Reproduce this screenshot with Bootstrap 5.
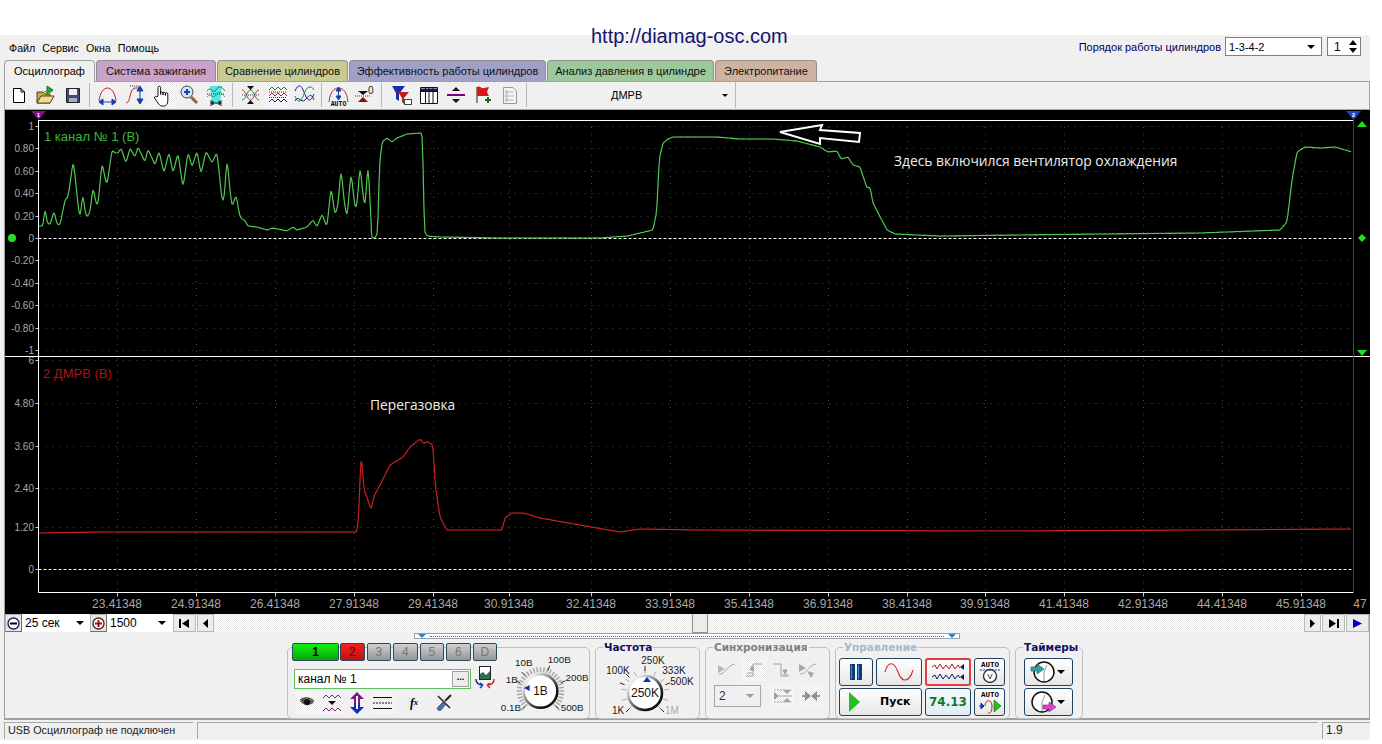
<!DOCTYPE html>
<html lang="ru">
<head>
<meta charset="UTF-8">
<title>Диамаг осциллограф</title>
<link rel="stylesheet" href="https://cdn.jsdelivr.net/npm/bootstrap@5.3.0/dist/css/bootstrap.min.css">
<style>
    body { background: #fff; font: 11px "Liberation Sans", Arial, sans-serif; color: #000; overflow: hidden; }
    svg { display: block; }

    .top-band { height: 35px; }
    .site-url { position: absolute; left: 591px; top: 24px; font-size: 20px; color: #14146e; line-height: 24px; z-index: 5; }
    .app { width: 1370px; height: 705px; background: #f0f0f0; }

    .menu-row { height: 25px; padding: 2px 9px 0 9px; }
    .menu-row span.mi { margin-right: 7px; line-height: 22px; font-size: 10.7px; }
    .order-label { color: #000060; }
    .win-field { background: #fff; border: 1px solid #808080; height: 19px; line-height: 16px; padding-left: 3px; }
    .caret-dn { display: inline-block; border: 4px solid transparent; border-top: 4px solid #000; border-bottom: 0; }
    .caret-grey { border-top-color: #999; }

    .tabs-row.nav-tabs { height: 21px; margin-left: 4px; border: 0; flex-wrap: nowrap; gap: 1px; }
    .tabs-row .nav-link { height: 21px; padding: 2px 0 0; text-align: center; font-size: 11px; color: #111; border: 1px solid #8f8f8f; border-bottom: 0; border-radius: 4px 4px 0 0; line-height: 17px; }
    .tabs-row .nav-link.active { background: #f0f0f0; height: 22px; position: relative; z-index: 2; color: #000; border-color: #a0a0a0; }

    .page-box { margin-left: 4px; width: 1366px; height: 639px; border: 1px solid #a0a0a0; border-bottom: 2px solid #a0a0a0; border-top-color: #a0a0a0; }
    .tool-row { height: 28px; border-bottom: 1px solid #a8a8a8; padding-bottom: 1px; }
    .tb-btn { width: 27px; height: 26px; flex: none; }
    .tb-narrow { width: 25px; }
    .tb-sep { width: 1px; height: 24px; background: #b8b8b8; margin: 0 4px 0 3px; flex: none; }
    .tb-combo { width: 209px; height: 26px; border-right: 1px solid #b8b8b8; padding-right: 7px; padding-left: 84px; }
    .dither { background: repeating-conic-gradient(#fff 0 25%, #e8e8e8 0 50%) 0 0 / 2px 2px; }

    .scroll-row { height: 18px; position: relative; background: #fff; }
    .zoom-btn { width: 17px; height: 18px; flex: none; background: #e8e8e8; border: 1px solid #b0b0b0; border-right-color: #707070; border-bottom-color: #707070; }
    .zoom-field { font-size: 12px; line-height: 18px; padding-left: 3px; }
    .nav-btn { height: 18px; flex: none; background: #ececec; border: 1px solid #fff; border-right-color: #707070; border-bottom-color: #707070; outline: 1px solid #b8b8b8; outline-offset: -1px; }
    .scroll-thumb { position: absolute; left: 687px; top: 0; width: 16px; height: 19px; background: #ececec; border: 1px solid #909090; border-top-color: #e8e8e8; z-index: 3; }

    .range-row { height: 7px; padding-left: 409px; padding-top: 1px; }
    .range-bar { width: 546px; height: 6px; border: 1px solid #9aa4b0; background: #fff; }

    .panel-row { padding: 8px 0 0 282px; gap: 5px; }
    .gbox { position: relative; height: 72px; border: 1px solid #c0c0c0; border-radius: 5px; flex: none; }
    .gbox-title { position: absolute; top: -7px; left: 7px; padding: 0 1px; background: #f0f0f0; font: bold 10.5px/13px "DejaVu Sans", sans-serif; }
    .t-navy { color: #101060; }
    .t-grey { color: #808080; }
    .t-pale { color: #a8b8d0; }

    .ch-btn { height: 18px; width: 25px; padding: 0; font-size: 12px; line-height: 16px; border: 1px solid #2a4a5a; border-radius: 2px; background: linear-gradient(#d0d0d0, #969696); color: #777; }
    .ch-on { width: 48px; background: linear-gradient(#10f010, #08a808); color: #000; font-weight: bold; }
    .ch-red { background: linear-gradient(#f42020, #c01010); color: #600; }
    .name-field { width: 177px; height: 20px; background: #fff; border: 1px solid #60c060; margin: 7px 0 0 2px; padding-left: 3px; font-size: 12px; line-height: 18px; }
    .dots-btn { width: 17px; height: 16px; background: #ececec; border: 1px solid #a0a0a0; font-weight: bold; font-size: 9px; line-height: 11px; text-align: center; }
    .sq-btn { width: 24px; height: 23px; flex: none; }

    .ctl-btn { height: 28px; padding: 0; flex: none; border: 1px solid #23415a; border-radius: 3px; background: linear-gradient(#fff, #e6e6e6); }
    .ctl-red { border-color: #e04040; border-width: 2px; }
    .ctl-text { font: bold 12px/26px "DejaVu Sans", sans-serif; }
    .speed-val { color: #0a7a20; background: linear-gradient(#f4f8fc, #e0ecf6); }
    .grey-field { width: 47px; height: 22px; border: 1px solid #a8a8a8; padding: 0 6px 0 4px; font-size: 12px; color: #333; }

    .status-row { height: 17px; margin: 2px 0 0 4px; gap: 4px; }
    .status-cell { height: 17px; border-top: 1px solid #a8a8a8; border-left: 1px solid #a8a8a8; padding-left: 3px; line-height: 15px; font-size: 10.8px; color: #222; }
</style>
</head>
<body>

<div class="top-band"></div>
<div class="site-url">http://diamag-osc.com</div>

<div class="app">
    <!-- menu -->
    <div class="menu-row d-flex align-items-start">
        <span class="mi">Файл</span><span class="mi">Сервис</span><span class="mi">Окна</span><span class="mi">Помощь</span>
        <div class="ms-auto d-flex align-items-center gap-1">
            <span class="order-label">Порядок работы цилиндров</span>
            <div class="win-field d-flex align-items-center justify-content-between" style="width:97px;padding-right:6px"><span>1-3-4-2</span><i class="caret-dn"></i></div>
            <div class="win-field d-flex align-items-center justify-content-between" style="width:34px;margin-left:1px;padding-right:3px;padding-left:6px;font-size:12px"><span>1</span>
                <svg width="8" height="13" viewBox="0 0 8 13"><path d="M4 0 8 5H0Z M0 8H8L4 13Z"/></svg>
            </div>
        </div>
    </div>

    <!-- tabs -->
    <ul class="nav nav-tabs tabs-row">
        <li class="nav-item"><a class="nav-link active" style="width:91px">Осциллограф</a></li>
        <li class="nav-item"><a class="nav-link" style="width:120px;background:#c8a2c8">Система зажигания</a></li>
        <li class="nav-item"><a class="nav-link" style="width:131px;background:#c9c992">Сравнение цилиндров</a></li>
        <li class="nav-item"><a class="nav-link" style="width:197px;background:#a09fc6">Эффективность работы цилиндров</a></li>
        <li class="nav-item"><a class="nav-link" style="width:167px;background:#9cc89c">Анализ давления в цилиндре</a></li>
        <li class="nav-item"><a class="nav-link" style="width:102px;background:#cfb3a2">Электропитание</a></li>
    </ul>

    <div class="page-box">
        <!-- toolbar -->
        <div class="tool-row d-flex align-items-center">
            <div class="tb-btn"><svg width="27" height="26" viewBox="0 0 27 26"><path d="M8.5 6.5H16L19.5 10V20.5H8.5Z M16 6.5V10H19.5" fill="#fff" stroke="#000"/></svg></div>
            <div class="tb-btn"><svg width="27" height="26" viewBox="0 0 27 26"><path d="M5 21V10H11L13 12H18V21Z" fill="#c9a53a" stroke="#444"/><path d="M5 21 9 14H22L18 21Z" fill="#f5dc7a" stroke="#444"/><path d="M15 4V13M15 4 21 8 15 12" fill="#2da02d" stroke="#1b7a1b"/><path d="M12 9H16V7L21 9 16 12Z" fill="#2da02d"/></svg></div>
            <div class="tb-btn"><svg width="27" height="26" viewBox="0 0 27 26"><path d="M7.5 6.5H20.5V20.5H7.5Z" fill="#3c4a78" stroke="#222"/><path d="M10 7H18V13H10Z" fill="#eee"/><path d="M10 16H18V20H10Z" fill="#aab"/></svg></div>
            <div class="tb-sep"></div>
            <div class="tb-btn"><svg width="27" height="26" viewBox="0 0 27 26"><path d="M5 19C6 10 10 6 13.5 6S21 10 22 19" fill="none" stroke="#c02030"/><path d="M5 20H22M5 20 9 17V23ZM22 20 18 17V23Z" fill="#1040b0" stroke="#1040b0"/></svg></div>
            <div class="tb-btn"><svg width="27" height="26" viewBox="0 0 27 26"><path d="M5 21C10 21 8 7 14 6H18" fill="none" stroke="#c02030"/><path d="M9 4H19" stroke="#333" stroke-dasharray="1 1"/><path d="M19 6V20M19 4 16 9H22ZM19 22 16 17H22Z" fill="#1040b0" stroke="#1040b0"/></svg></div>
            <div class="tb-btn dither"><svg width="27" height="26" viewBox="0 0 27 26"><path d="M10 14V5.5a1.3 1.3 0 0 1 2.6 0V12.5V11a1.2 1.2 0 0 1 2.4 0V13V11.5a1.2 1.2 0 0 1 2.4 0V13.5V12a1.2 1.2 0 0 1 2.4 0V19C19.8 22 18 24 16 24H14C12 24 11 22.5 10 21L6.5 16C6 14.5 8 13.5 9 15Z" fill="#fff" stroke="#000" stroke-width=".9"/></svg></div>
            <div class="tb-btn"><svg width="27" height="26" viewBox="0 0 27 26"><path d="M16 15 22 21" stroke="#8a6a3a" stroke-width="3"/><circle cx="12" cy="10" r="6" fill="#cfe6f8" stroke="#445"/><path d="M9 10H15M12 7V13" stroke="#1040a0" stroke-width="2"/></svg></div>
            <div class="tb-btn"><svg width="27" height="26" viewBox="0 0 27 26"><path d="M8 4H20L18 22H10Z" fill="#4fe8e8"/><path d="M5 9C9 3 11 13 14 8S19 4 23 9" fill="none" stroke="#208040"/><path d="M5 12H23" stroke="#333" stroke-dasharray="1 1"/><path d="M5 15C9 10 11 18 14 13S19 11 23 15" fill="none" stroke="#208040" opacity=".7"/><path d="M9 21H19M9 21 11 19V23ZM19 21 17 19V23Z M9 18V24M19 18V24" stroke="#223" fill="#223"/></svg></div>
            <div class="tb-sep"></div>
            <div class="tb-btn"><svg width="27" height="26" viewBox="0 0 27 26"><path d="M5 8C9 8 10 18 13.5 18S18 8 22 8" fill="none" stroke="#b03030"/><path d="M5 18C9 18 10 8 13.5 8S18 18 22 18" fill="none" stroke="#208040"/><path d="M5 13H22" stroke="#444" stroke-dasharray="1 1"/><path d="M10 4H17L13.5 8ZM10 22H17L13.5 18Z" fill="#111"/></svg></div>
            <div class="tb-btn dither"><svg width="27" height="26" viewBox="0 0 27 26"><g fill="none"><path d="M5 8 8 5 11 8 14 5 17 8 20 5 23 8" stroke="#208040"/><path d="M5 10H23M5 15.5H23" stroke="#333" stroke-dasharray="1 1"/><path d="M5 14 8 11 11 14 14 11 17 14 20 11 23 14" stroke="#c02030"/><path d="M5 20 8 17 11 20 14 17 17 20 20 17 23 20" stroke="#102080"/></g></svg></div>
            <div class="tb-btn"><svg width="27" height="26" viewBox="0 0 27 26"><g fill="none"><path d="M4 9C7 2 10 2 13 10S19 22 23 12" stroke="#102080"/><path d="M4 14C7 22 10 20 13 12S20 3 23 8" stroke="#208040"/><path d="M4 19C7 12 10 22 14 18S20 10 23 18" stroke="#102080"/></g></svg></div>
            <div class="tb-sep"></div>
            <div class="tb-btn tb-narrow"><svg width="25" height="26" viewBox="0 0 25 26"><path d="M3 20C4 10 8 6 12.5 6S21 10 22 20" fill="none" stroke="#c02030"/><path d="M12.5 7V17M12.5 5 10 9H15ZM12.5 18 10 14H15Z" fill="#1040b0" stroke="#1040b0"/><text x="12.5" y="24" text-anchor="middle" font-family="Liberation Mono" font-weight="bold" font-size="6.5">AUTO</text></svg></div>
            <div class="tb-btn"><svg width="27" height="26" viewBox="0 0 27 26"><path d="M4 14H20" stroke="#444" stroke-dasharray="1 1"/><path d="M7 9H17L12 13Z" fill="#111"/><path d="M7 20H17L12 15Z" fill="#8a1010"/><text x="17" y="12" font-size="10" font-family="Liberation Sans" fill="#222">0</text></svg></div>
            <div class="tb-sep" style="margin-right:6px"></div>
            <div class="tb-btn"><svg width="27" height="26" viewBox="0 0 27 26"><path d="M4 4H17L11 12V19L8 17V11Z" fill="#1c2ca8"/><path d="M10 10H21L16 16V22L14 20V16Z" fill="#c02020"/><rect x="16.5" y="17.5" width="7" height="5" fill="#fff" stroke="#444"/></svg></div>
            <div class="tb-btn"><svg width="27" height="26" viewBox="0 0 27 26"><path d="M5.5 5.5H22.5V21.5H5.5Z" fill="#fff" stroke="#111"/><path d="M5.5 6.5H22.5V9.5H5.5Z" fill="#1a1a5a"/><path d="M5.5 9.5H22.5M10.5 6V21M14 6V21M18 6V21" stroke="#111"/></svg></div>
            <div class="tb-btn"><svg width="27" height="26" viewBox="0 0 27 26"><path d="M5 13H23" stroke="#800080" stroke-width="2"/><path d="M10 9H18L14 5ZM10 17H18L14 21Z" fill="#111"/></svg></div>
            <div class="tb-btn"><svg width="27" height="26" viewBox="0 0 27 26"><path d="M8 5V21" stroke="#222"/><path d="M8 5C11 3 12 7 15 6L20 5 18 10 20 14H14L8 14Z" fill="#d81818"/><path d="M16 18H22M19 15V21" stroke="#107020" stroke-width="2"/></svg></div>
            <div class="tb-btn"><svg width="27" height="26" viewBox="0 0 27 26"><path d="M7.5 5.5H17L20.5 9V21.5H7.5Z" fill="#f4f4f4" stroke="#999"/><path d="M9.5 9H12V11H9.5ZM9.5 13H12V15H9.5ZM9.5 17H12V19H9.5Z" fill="none" stroke="#999" stroke-width=".7"/><path d="M13 10H18M13 14H18M13 18H18" stroke="#bbb"/></svg></div>
            <div class="tb-sep" style="margin-right:0"></div>
            <div class="tb-combo d-flex align-items-center justify-content-between">
                <span>ДМРВ</span><i class="caret-dn" style="border-width:3px;border-bottom:0"></i>
            </div>
        </div>

        <!-- plots, built by the script below -->
        <svg id="scope" width="1365" height="504" viewBox="5 110 1365 504" style="background:#000"></svg>

        <!-- scroll row -->
        <div class="scroll-row d-flex">
            <div class="zoom-btn d-flex align-items-center justify-content-center"><svg width="13" height="13" viewBox="0 0 13 13"><circle cx="6.5" cy="6.5" r="5.5" fill="#fff" stroke="#202060" stroke-width="1.4"/><path d="M3 6.5H10" stroke="#000" stroke-width="2"/></svg></div>
            <div class="zoom-field d-flex align-items-center justify-content-between" style="width:68px;padding-right:6px"><span>25 сек</span><i class="caret-dn"></i></div>
            <div class="zoom-btn d-flex align-items-center justify-content-center"><svg width="13" height="13" viewBox="0 0 13 13"><circle cx="6.5" cy="6.5" r="5.5" fill="#fff" stroke="#602020" stroke-width="1.4"/><path d="M3 6.5H10M6.5 3V10" stroke="#a01010" stroke-width="2"/></svg></div>
            <div class="zoom-field d-flex align-items-center justify-content-between" style="width:65px;padding-right:6px"><span>1500</span><i class="caret-dn"></i></div>
            <div class="nav-btn d-flex align-items-center justify-content-center" style="width:23px;margin-left:1px"><svg width="11" height="9" viewBox="0 0 11 9"><path d="M0 0H2V9H0ZM10 0V9L3 4.5Z"/></svg></div>
            <div class="nav-btn d-flex align-items-center justify-content-center" style="width:17px;margin-left:1px"><svg width="5" height="9" viewBox="0 0 5 9"><path d="M5 0V9L0 4.5Z"/></svg></div>
            <div class="dither flex-grow-1"></div>
            <div class="nav-btn d-flex align-items-center justify-content-center" style="width:17px"><svg width="5" height="9" viewBox="0 0 5 9"><path d="M0 0V9L5 4.5Z"/></svg></div>
            <div class="nav-btn d-flex align-items-center justify-content-center" style="width:23px;margin-left:1px"><svg width="11" height="9" viewBox="0 0 11 9"><path d="M11 0H9V9H11ZM1 0V9L8 4.5Z"/></svg></div>
            <div class="nav-btn d-flex align-items-center justify-content-center" style="width:23px;margin-left:1px"><svg width="9" height="9" viewBox="0 0 9 9"><path d="M0 0V9L9 4.5Z" fill="#0000c0"/></svg></div>
            <div class="scroll-thumb"></div>
        </div>

        <!-- time range strip -->
        <div class="range-row">
            <div class="range-bar d-flex align-items-center justify-content-between" style="padding:0 3px">
                <svg width="8" height="4" viewBox="0 0 8 4"><path d="M0 0H8L4 4Z" fill="#3080c0"/></svg>
                <div class="flex-grow-1 mx-1" style="border-top:1px dotted #506880"></div>
                <svg width="8" height="4" viewBox="0 0 8 4"><path d="M0 0H8L4 4Z" fill="#3080c0"/></svg>
            </div>
        </div>

        <!-- control groups -->
        <div class="panel-row d-flex">
            <!-- channels -->
            <div class="gbox d-flex" style="width:303px">
                <div style="width:209px;padding-left:4px">
                    <div class="d-flex" style="gap:2px;margin-top:-5px;position:relative">
                        <button class="ch-btn ch-on" style="margin-right:-1px">1</button>
                        <button class="ch-btn ch-red">2</button>
                        <button class="ch-btn">3</button>
                        <button class="ch-btn">4</button>
                        <button class="ch-btn">5</button>
                        <button class="ch-btn">6</button>
                        <button class="ch-btn">D</button>
                    </div>
                    <div class="d-flex align-items-center">
                        <div class="name-field d-flex justify-content-between align-items-center" style="padding-right:1px"><span>канал № 1</span><div class="dots-btn">...</div></div>
                        <svg class="mt-1 ms-1" width="20" height="24" viewBox="0 0 20 24"><rect x="4.5" y="1.5" width="11" height="13" fill="#fff" stroke="#222"/><path d="M5 14V9L8 7 11 10 15 6V14Z" fill="#2f6f4f"/><path d="M1 14C1 19 5 20 8 20M8 20 5 18M8 20 5 23" fill="none" stroke="#1030a0" stroke-width="1.4"/><path d="M19 14C19 19 15 20 12 20M12 20 15 18M12 20 15 23" fill="none" stroke="#c02020" stroke-width="1.4"/></svg>
                    </div>
                    <div class="d-flex" style="gap:1px;margin-top:2px;margin-left:3px">
                        <div class="sq-btn dither d-flex align-items-center justify-content-center"><svg width="16" height="12" viewBox="0 0 16 12"><path d="M1 4C5 0 11 1 15 5 11 9 6 9 3 6Z" fill="#555"/><circle cx="8" cy="5" r="3" fill="#111"/><path d="M1 3C5 0 11 0 15 4" fill="none" stroke="#111"/></svg></div>
                        <div class="sq-btn dither d-flex align-items-center justify-content-center"><svg width="20" height="20" viewBox="0 0 20 20"><g fill="none" stroke="#802080"><path d="M1 5 4 2 7 5 10 2 13 5 16 2 19 5"/><path d="M1 18 4 15 7 18 10 15 13 18 16 15 19 18"/></g><path d="M6 8H14L10 12Z" fill="#111"/></svg></div>
                        <div class="sq-btn d-flex align-items-center justify-content-center"><svg width="16" height="22" viewBox="0 0 16 22"><path d="M8 0 15 7H11V11H5V7H1Z" fill="#7a1a8a"/><path d="M8 22 15 15H11V11H5V15H1Z" fill="#1030b0"/><path d="M7 4H9V17H7Z" fill="#fff"/></svg></div>
                        <div class="sq-btn dither d-flex align-items-center justify-content-center" style="width:25px"><svg width="19" height="14" viewBox="0 0 19 14"><path d="M0 1.5H19M0 12.5H19" stroke="#111"/><path d="M0 7H19" stroke="#111" stroke-dasharray="2 1"/></svg></div>
                        <div class="sq-btn d-flex align-items-center justify-content-center" style="margin-left:6px;font:italic bold 12px/1 'Liberation Serif',serif">f<span style="font-size:8px">x</span></div>
                        <div class="sq-btn d-flex align-items-center justify-content-center" style="margin-left:5px"><svg width="17" height="17" viewBox="0 0 17 17"><path d="M2 2 14 14" stroke="#222" stroke-width="1.5" fill="none"/><path d="M15 1 9 7" stroke="#222" stroke-width="2"/><path d="M7 8 2 13A2 2 0 0 0 5 16L10 10Z" fill="#4a70b0" stroke="#203060" stroke-width=".6"/></svg></div>
                    </div>
                </div>
                <svg class="dial" width="93" height="69" viewBox="497 650 93 69" data-cx="541" data-cy="693" data-val="1В"></svg>
            </div>

            <!-- frequency -->
            <div class="gbox" style="width:105px">
                <div class="gbox-title t-navy">Частота</div>
                <svg class="dial" width="103" height="70" viewBox="596 648 103 70" data-cx="645" data-cy="693" data-val="250K"></svg>
            </div>

            <!-- sync, disabled -->
            <div class="gbox" style="width:125px">
                <div class="gbox-title t-grey">Синхронизация</div>
                <div class="d-flex" style="padding:10px 0 0 9px;gap:3px">
                    <div class="sq-btn d-flex align-items-center justify-content-center"><svg width="20" height="18" viewBox="0 0 20 18"><path d="M2 13C8 14 10 4 18 3" fill="none" stroke="#a8a8a8"/><path d="M1 4 8 8 1 12Z" fill="#b8b8b8"/></svg></div>
                    <div class="sq-btn dither d-flex align-items-center justify-content-center"><svg width="20" height="18" viewBox="0 0 20 18"><path d="M2 15H9V3H18" fill="none" stroke="#a0a0a0"/><path d="M6 9 8 5 10 9ZM3 12H8" fill="#a0a0a0" stroke="#a0a0a0"/></svg></div>
                    <div class="sq-btn d-flex align-items-center justify-content-center"><svg width="20" height="18" viewBox="0 0 20 18"><path d="M2 3H10V15H18" fill="none" stroke="#a0a0a0"/><path d="M12 9 14 13 16 9ZM12 14H17" fill="#a0a0a0" stroke="#a0a0a0"/></svg></div>
                    <div class="sq-btn d-flex align-items-center justify-content-center"><svg width="20" height="18" viewBox="0 0 20 18"><path d="M2 13C8 14 10 4 18 3" fill="none" stroke="#a8a8a8"/><path d="M1 3 8 7 1 11ZM9 10 16 12 13 17Z" fill="#a8a8a8"/></svg></div>
                </div>
                <div class="d-flex align-items-center" style="padding:3px 0 0 8px">
                    <div class="grey-field d-flex align-items-center justify-content-between"><span>2</span><i class="caret-dn caret-grey"></i></div>
                    <div class="sq-btn dither d-flex align-items-center justify-content-center" style="margin-left:10px"><svg width="20" height="18" viewBox="0 0 20 18"><path d="M1 3H19M1 15H19" stroke="#a8a8a8" stroke-dasharray="2 1"/><path d="M1 5 6 9 1 13ZM10 3H18L14 7ZM10 15H18L14 11Z" fill="#a0a0a0"/><path d="M6 9H19" stroke="#a8a8a8"/></svg></div>
                    <div class="sq-btn dither d-flex align-items-center justify-content-center ms-1"><svg width="20" height="12" viewBox="0 0 20 12"><path d="M1 6H8M12 6H19" stroke="#999" stroke-width="2"/><path d="M10 6 4 1V11ZM10 6 16 1V11Z" fill="#909090"/></svg></div>
                </div>
            </div>

            <!-- control -->
            <div class="gbox" style="width:175px">
                <div class="gbox-title t-pale">Управление</div>
                <div class="d-flex" style="padding:10px 0 0 3px;gap:3px">
                    <button class="ctl-btn d-flex align-items-center justify-content-center" style="width:34px"><svg width="14" height="16" viewBox="0 0 14 16"><path d="M1 0H6V16H1ZM8 0H13V16H8Z" fill="#103878"/><path d="M2 1H3V15H2ZM9 1H10V15H9Z" fill="#30a0d0"/></svg></button>
                    <button class="ctl-btn d-flex align-items-center justify-content-center" style="width:46px"><svg width="30" height="20" viewBox="0 0 30 20"><path d="M1 10C4 -1 10 -1 14 10S25 21 29 8" fill="none" stroke="#d03030" stroke-width="1.2"/></svg></button>
                    <button class="ctl-btn ctl-red d-flex align-items-center justify-content-center" style="width:46px"><svg width="34" height="20" viewBox="0 0 34 20"><path d="M1 5 4 3 6 7 9 2 12 7 15 3 18 7 21 2 24 7 27 3 29 6" fill="none" stroke="#b02020"/><path d="M1 15 4 13 6 17 9 12 12 17 15 13 18 17 21 12 24 17 27 13 29 16" fill="none" stroke="#102060"/><path d="M33 2V8L29 5ZM33 12V18L29 15Z" fill="#102060"/></svg></button>
                    <button class="ctl-btn d-flex align-items-center justify-content-center" style="width:31px"><svg width="24" height="26" viewBox="0 0 24 26"><text x="12" y="8" text-anchor="middle" font-family="Liberation Mono" font-weight="bold" font-size="7.5">AUTO</text><circle cx="12" cy="17" r="6.5" fill="#fff" stroke="#333" stroke-width="1.4"/><text x="12" y="20" text-anchor="middle" font-family="Liberation Sans" font-size="8">V</text><path d="M2 11H22" stroke="#1040a0" stroke-dasharray="2 1"/></svg></button>
                </div>
                <div class="d-flex" style="padding:2px 0 0 3px;gap:3px">
                    <button class="ctl-btn ctl-text d-flex align-items-center" style="width:83px;padding-left:9px"><svg width="11" height="20" viewBox="0 0 11 20"><path d="M0 0V20L11 10Z" fill="#22c022"/></svg><span style="margin-left:20px;font-size:11px">Пуск</span></button>
                    <button class="ctl-btn ctl-text speed-val" style="width:46px;font-size:12px">74.13</button>
                    <button class="ctl-btn d-flex align-items-center justify-content-center" style="width:31px"><svg width="24" height="26" viewBox="0 0 24 26"><text x="12" y="8" text-anchor="middle" font-family="Liberation Mono" font-weight="bold" font-size="7.5">AUTO</text><path d="M7 17C7 10 14 10 14 17S12 24 10 24" fill="none" stroke="#c02020"/><path d="M1 17H6M6 17 3 14V20Z" fill="#1030b0" stroke="#1030b0"/><path d="M16 11V23L23 17Z" fill="#22c022" stroke="#106010" stroke-width=".6"/></svg></button>
                </div>
            </div>

            <!-- timers -->
            <div class="gbox" style="width:68px">
                <div class="gbox-title t-navy">Таймеры</div>
                <div class="d-flex flex-column" style="padding:10px 0 0 8px;gap:2px">
                    <button class="ctl-btn d-flex align-items-center" style="width:49px;padding-left:5px"><svg width="26" height="24" viewBox="0 0 26 24"><circle cx="14" cy="12" r="10" fill="#fff" stroke="#111" stroke-width="1.5"/><path d="M14 12 17 5M14 12V21" stroke="#999"/><path d="M1 7H7V4L14 9 7 14V11H1Z" fill="#30a0a0" stroke="#206060" stroke-width=".6"/></svg><i class="caret-dn ms-auto" style="margin-right:7px"></i></button>
                    <button class="ctl-btn d-flex align-items-center" style="width:49px;padding-left:5px"><svg width="26" height="24" viewBox="0 0 26 24"><circle cx="12" cy="12" r="10" fill="#fff" stroke="#111" stroke-width="1.5"/><path d="M12 12 15 5M12 12V21" stroke="#999"/><path d="M13 15H19V12L26 17 19 22V19H13Z" fill="#e040d0" stroke="#802080" stroke-width=".6"/></svg><i class="caret-dn ms-auto" style="margin-right:7px"></i></button>
                </div>
            </div>
        </div>
    </div>

    <!-- status bar -->
    <div class="status-row d-flex">
        <div class="status-cell" style="width:189px">USB Осциллограф не подключен</div>
        <div class="status-cell" style="width:1121px"></div>
        <div class="status-cell" style="width:48px;font-size:12px">1.9</div>
    </div>
</div>

<script src="https://cdn.jsdelivr.net/npm/bootstrap@5.3.0/dist/js/bootstrap.bundle.min.js"></script>
<script>
    const NS = 'http://www.w3.org/2000/svg';
    function add(parent, tag, attrs, text) {
        let el = document.createElementNS(NS, tag);
        for (let k in attrs) el.setAttribute(k, attrs[k]);
        if (text !== undefined) el.textContent = text;
        parent.appendChild(el);
        return el;
    }

    const scope = document.getElementById('scope');
    const LEFT = 38.5, RIGHT = 1353.5, BOTTOM = 592.5;
    const font = { 'font-family': 'Liberation Sans, Arial, sans-serif' };

    // vertical grid + time axis
    const times = [[117,'23.41348'],[196,'24.91348'],[275,'26.41348'],[354,'27.91348'],[433,'29.41348'],[509,'30.91348'],[591,'32.41348'],[670,'33.91348'],[749,'35.41348'],[828,'36.91348'],[907,'38.41348'],[985,'39.91348'],[1064,'41.41348'],[1143,'42.91348'],[1222,'44.41348'],[1301,'45.91348'],[1360,'47']];
    times.forEach(([x, t]) => {
        if (x < RIGHT) {
            add(scope, 'path', { d: `M${x + .5} 120V${BOTTOM}`, stroke: '#4a4a4a', 'stroke-dasharray': '1 6' });
            add(scope, 'path', { d: `M${x + .5} ${BOTTOM}v4`, stroke: '#ccc' });
        }
        add(scope, 'text', { x, y: 608, 'text-anchor': 'middle', 'font-size': 12, fill: '#a8a8a8', ...font }, t);
    });

    // horizontal grid + value axis
    const upper = [[126,'1'],[148,'0.80'],[171,'0.60'],[193,'0.40'],[216,'0.20'],[238,'0'],[260,'-0.20'],[283,'-0.40'],[305,'-0.60'],[328,'-0.80'],[350,'-1']];
    const lower = [[360,'6'],[403,'4.80'],[446,'3.60'],[488,'2.40'],[527,'1.20'],[569,'0']];
    upper.concat(lower).forEach(([y, t]) => {
        let zero = t === '0';
        add(scope, 'path', { d: `M${LEFT} ${y + .5}H${RIGHT}`, stroke: zero ? '#fff' : '#4a4a4a', 'stroke-dasharray': zero ? '3 2' : '1 6' });
        add(scope, 'path', { d: `M${LEFT - 3} ${y + .5}h3`, stroke: '#ccc' });
        add(scope, 'text', { x: 34, y: y + 3.5, 'text-anchor': 'end', 'font-size': 10, fill: '#a8a8a8', ...font }, t);
    });

    // frame lines
    add(scope, 'path', { d: `M${LEFT} 120.5H${RIGHT}M5 356.5H1370M${LEFT} ${BOTTOM}H${RIGHT}M${LEFT} 120V${BOTTOM}`, stroke: '#fff', fill: 'none' });
    add(scope, 'path', { d: `M${RIGHT} 120V${BOTTOM}`, stroke: '#3030e0' });

    // resample, add slight noise, then round the peaks like the real capture
    function trace(points, color, amp) {
        let xs = [], ys = [];
        for (let i = 0; i < points.length - 1; i++) {
            let [x0, y0] = points[i], [x1, y1] = points[i + 1];
            let n = Math.max(1, Math.round((x1 - x0) / 1));
            for (let s = 0; s < n; s++) {
                let x = x0 + (x1 - x0) * s / n;
                let y = y0 + (y1 - y0) * s / n;
                let a = (x1 - x0) > 6 ? amp : 0;
                xs.push(x);
                ys.push(y + a * Math.sin(x * 2.7) * Math.cos(x * 0.9));
            }
        }
        let out = xs.map((x, i) => {
            let y = (ys[Math.max(i - 1, 0)] + 2 * ys[i] + ys[Math.min(i + 1, ys.length - 1)]) / 4;
            return x.toFixed(1) + ',' + y.toFixed(1);
        });
        add(scope, 'polyline', { points: out.join(' '), fill: 'none', stroke: color, 'stroke-width': 1.2, 'stroke-linejoin': 'round' });
    }

    trace([[39,226],[43,226],[45,207],[47,222],[50,225],[54,211],[57,224],[60,225],[65,200],[68,197],[72,170],[73,160],[75,175],[78,205],[80,218],[83,193],[85,212],[87,217],[90,212],[93,187],[96,203],[98,205],[102,162],[105,178],[107,185],[112,150],[115,153],[118,153],[121,148],[126,163],[130,148],[135,157],[138,147],[145,162],[148,149],[155,165],[159,151],[164,173],[169,152],[173,173],[178,153],[183,188],[188,152],[192,167],[197,151],[201,174],[206,151],[212,163],[217,152],[222,200],[224,200],[227,158],[230,190],[232,207],[236,195],[240,217],[245,221],[248,226],[257,227],[267,230],[273,228],[287,231],[293,227],[297,230],[307,227],[313,220],[317,227],[322,214],[327,227],[331,187],[335,215],[338,205],[341,168],[344,200],[347,218],[351,172],[355,208],[357,205],[360,165],[363,195],[365,208],[368,162],[371,220],[371.5,238],[375,238],[378,232],[379,170],[382,142],[387,138],[392,142],[397,138],[407,134],[422,133],[423,147],[424,230],[427,236],[440,237],[500,238],[600,238],[628,236],[640,233],[653,230],[657,210],[659,160],[663,143],[668,139],[673,137],[717,137],[740,139],[773,139],[797,141],[820,147],[828,152],[837,151],[841,159],[848,157],[853,165],[860,167],[867,188],[870,187],[873,203],[887,230],[895,234],[940,236],[1100,234],[1200,233],[1280,230],[1287,222],[1292,180],[1297,152],[1305,147],[1320,148],[1335,147],[1352,152]], '#52c852', .5);

    trace([[39,533],[100,532],[200,532],[300,532],[357,532],[359,510],[361,451],[364,490],[368,500],[371,510],[374,496],[380,485],[390,465],[403,457],[410,447],[420,439],[423,443],[428,442],[433,445],[435,483],[440,517],[447,530],[502,530],[505,518],[512,513],[523,513],[540,518],[580,525],[620,532],[640,529],[700,530],[1000,531],[1200,530],[1352,529]], '#c82020', .4);

    // channel captions and notes
    add(scope, 'text', { x: 44, y: 141, 'font-size': 13, fill: '#38b838', ...font }, '1 канал № 1 (В)');
    add(scope, 'text', { x: 43, y: 378, 'font-size': 13, fill: '#a81414', ...font }, '2 ДМРВ (В)');
    add(scope, 'text', { x: 894, y: 166, 'font-size': 13.8, fill: '#eee', 'font-family': 'Open Sans, sans-serif' }, 'Здесь включился вентилятор охлаждения');
    add(scope, 'text', { x: 370, y: 410, 'font-size': 13.8, fill: '#eee', 'font-family': 'Open Sans, sans-serif' }, 'Перегазовка');
    add(scope, 'polygon', { points: '780,132 822,125 820,130 860,133 859,142 820,138 820,144', fill: '#000', stroke: '#fff', 'stroke-width': 2 });

    // cursors and markers
    add(scope, 'path', { d: 'M31 111H46L38.5 120Z', fill: '#80108a' });
    add(scope, 'text', { x: 38.5, y: 117, 'text-anchor': 'middle', 'font-size': 6, 'font-weight': 'bold', fill: '#fff', ...font }, '1');
    add(scope, 'path', { d: 'M1346 111H1361L1353.5 120Z', fill: '#2040d0' });
    add(scope, 'text', { x: 1353.5, y: 117, 'text-anchor': 'middle', 'font-size': 6, 'font-weight': 'bold', fill: '#fff', ...font }, '2');
    add(scope, 'circle', { cx: 12, cy: 238, r: 4, fill: '#20e020' });
    add(scope, 'path', { d: 'M1362 234 1366 238 1362 242 1358 238Z', fill: '#20e020' });
    add(scope, 'path', { d: 'M1362 121 1367 127H1357Z', fill: '#20e020' });
    add(scope, 'path', { d: 'M1357 350H1367L1362 356Z', fill: '#20e020' });

    // rotary switches
    const dialLabels = {
        '1В': [[524,668,'10В'],[560,665,'100В'],[512,685,'1В'],[578,683,'200В'],[511,713,'0.1В'],[573,713,'500В']],
        '250K': [[653,664,'250K'],[618,674,'100K'],[674,674,'333K'],[682,685,'500K'],[618,714,'1K'],[672,714,'1M',true]]
    };
    document.querySelectorAll('.dial').forEach(svg => {
        let cx = +svg.dataset.cx, cy = +svg.dataset.cy, val = svg.dataset.val;
        let gid = 'ring' + cx;
        let defs = add(svg, 'defs', {});
        let grad = add(defs, 'linearGradient', { id: gid, x1: 0, y1: 0, x2: 1, y2: 1 });
        add(grad, 'stop', { offset: '.15', 'stop-color': '#eee' });
        add(grad, 'stop', { offset: '.75', 'stop-color': '#111' });
        for (let a = -135; a <= 135; a += val === '1В' ? 9 : 27) {
            let r = a * Math.PI / 180, s = Math.sin(r), c = Math.cos(r);
            add(svg, 'path', { d: `M${cx + 19 * s} ${cy - 19 * c}L${cx + 24 * s} ${cy - 24 * c}`, stroke: '#aaa', 'stroke-width': val === '1В' ? 1.6 : 1 });
        }
        [-135, -68, -45, 20, 68, 135].forEach(a => {
            if (val !== '1В' && a === 20) a = 0;
            let r = a * Math.PI / 180, s = Math.sin(r), c = Math.cos(r);
            add(svg, 'path', { d: `M${cx + 22 * s} ${cy - 22 * c}L${cx + 27 * s} ${cy - 27 * c}`, stroke: '#222' });
        });
        add(svg, 'circle', { cx, cy, r: 17, fill: '#fff', stroke: `url(#${gid})`, 'stroke-width': 2.6 });
        add(svg, 'text', { x: cx, y: cy + 4, 'text-anchor': 'middle', 'font-size': 12, fill: '#111', ...font }, val);
        let p = val === '1В' ? `${cx - 17},${cy - 3} ${cx - 11},${cy - 6} ${cx - 11},${cy}` : `${cx + 2},${cy - 16} ${cx - 2},${cy - 11} ${cx + 6},${cy - 11}`;
        add(svg, 'polygon', { points: p, fill: '#1030b0' });
        dialLabels[val].forEach(([x, y, t, off]) => {
            add(svg, 'text', { x, y, 'text-anchor': 'middle', 'font-size': 10, fill: off ? '#aaa' : '#222', ...font }, t);
        });
    });
</script>
</body>
</html>
